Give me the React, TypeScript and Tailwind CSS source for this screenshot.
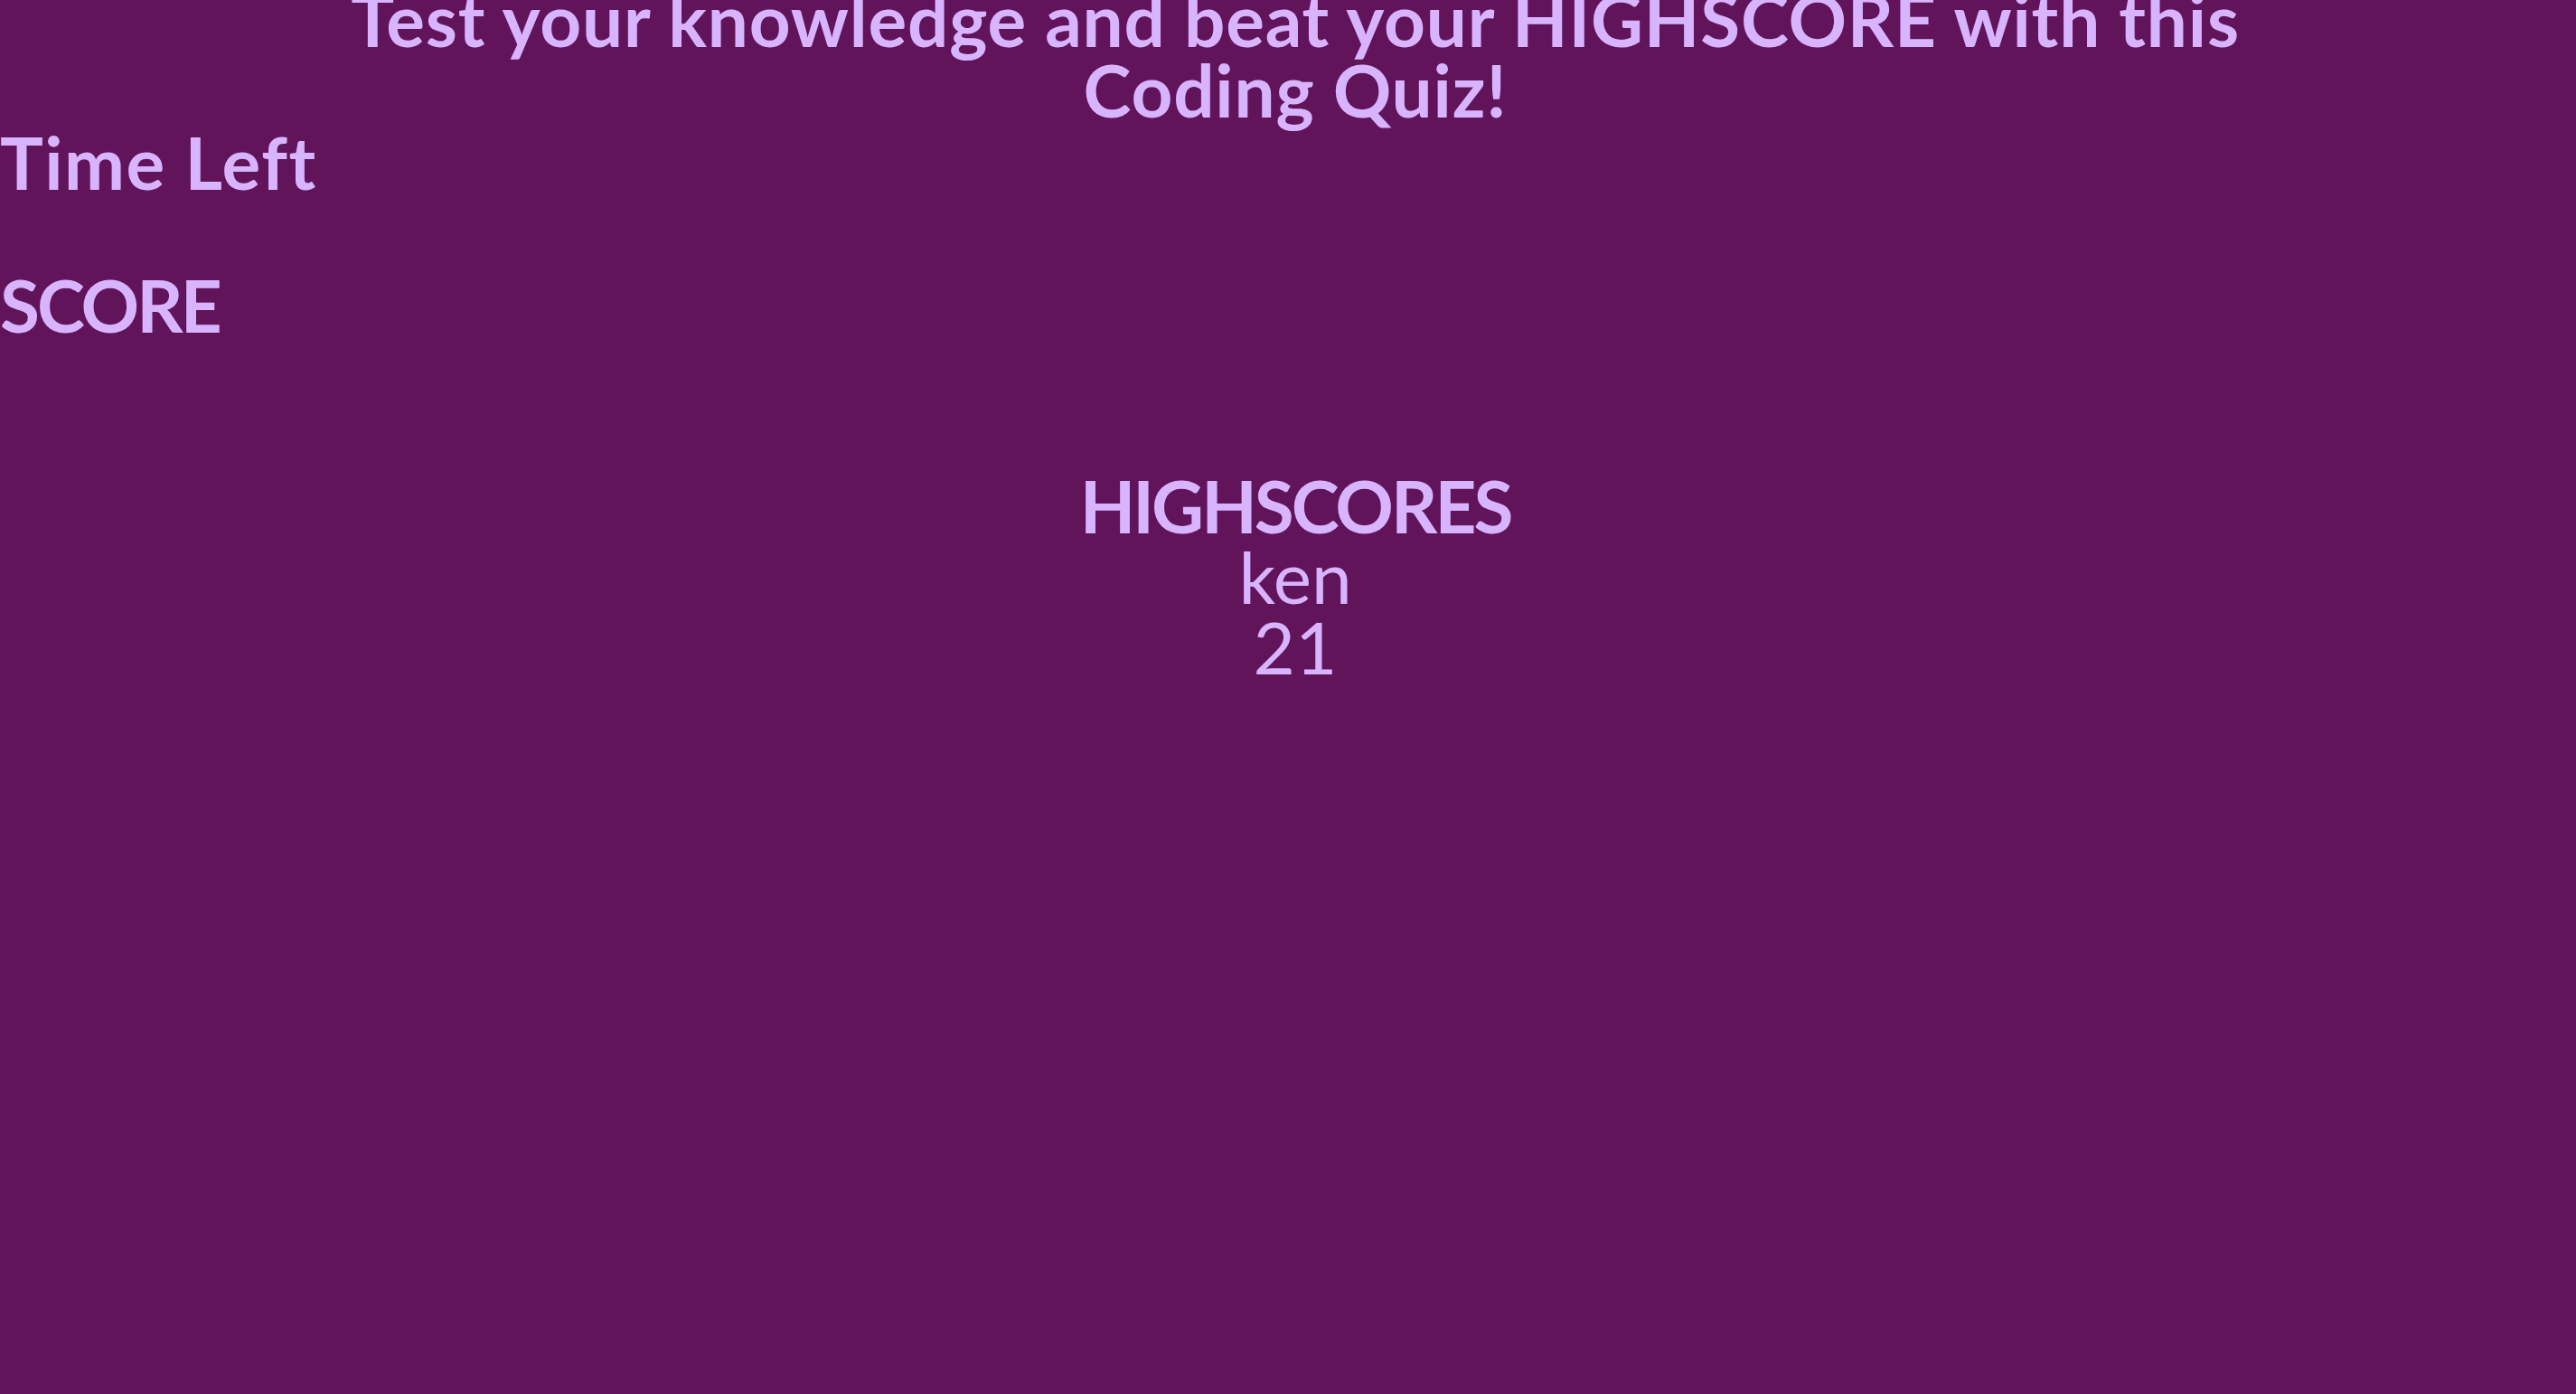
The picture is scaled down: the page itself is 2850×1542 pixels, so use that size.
import React from "react";

export default function App() {
  return (
    <div className="min-h-screen w-full bg-[#62145a] text-[#d8b4fe] font-['Lato',sans-serif] overflow-hidden">
      <h1 className="-mt-[18px] pl-4 text-center text-[80px] font-bold leading-[78px] tracking-[0.8px]">
        Test your knowledge and beat your HIGHSCORE with this
        <br />
        Coding Quiz!
      </h1>
      <div className="mt-[2px] text-[80px] font-bold leading-[78px] tracking-[1.5px]">Time Left</div>
      <div className="mt-[80px] text-[80px] font-bold leading-[78px] tracking-[-3px]">SCORE</div>
      <div className="mt-[144px] pl-4 text-center">
        <h2 className="text-[80px] font-bold leading-[78px] tracking-[-3px]">HIGHSCORES</h2>
        <div className="text-[80px] leading-[78px]">ken</div>
        <div className="text-[80px] leading-[78px]">21</div>
      </div>
    </div>
  );
}
